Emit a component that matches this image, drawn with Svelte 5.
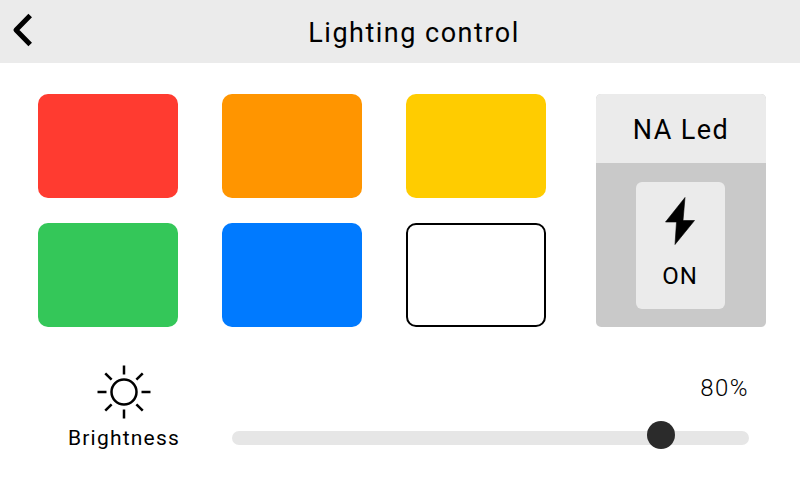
<script>
  const swatches = ['red', 'orange', 'yellow', 'green', 'blue', 'white'];
  const rays = [0, 45, 90, 135, 180, 225, 270, 315];
</script>

<div class="screen">
  <header class="top">
    <button class="back" aria-label="Back">
      <svg width="22" height="38" viewBox="0 0 22 38"><path d="M19.2 4.5 L5 19 L19.2 33.5" fill="none" stroke="#000" stroke-width="5" stroke-linejoin="round" /></svg>
    </button>
    <h1>Lighting control</h1>
  </header>
  <main class="body">
    <div class="upper">
      <div class="grid">
        {#each swatches as s}
          <div class="swatch {s}"></div>
        {/each}
      </div>
      <section class="device">
        <div class="name">NA Led</div>
        <div class="well">
          <div class="toggle">
            <svg width="30" height="48" viewBox="0 0 30 48"><path d="M20 0.5 L0.5 25 H11.5 L10 47.5 L29.5 23.5 H18 Z" fill="#000" stroke="#000" stroke-width="0.6" stroke-linejoin="round" /></svg>
            <span>ON</span>
          </div>
        </div>
      </section>
    </div>
    <div class="lower">
      <div class="label">
        <svg width="54" height="54" viewBox="0 0 54 54">
          <circle cx="27" cy="27" r="12.5" fill="none" stroke="#000" stroke-width="2.5" />
          {#each rays as r}
            <line x1="27" y1="0.5" x2="27" y2="9.5" stroke="#000" stroke-width="2.5" transform="rotate({r} 27 27)" />
          {/each}
        </svg>
        <span>Brightness</span>
      </div>
      <div class="slider">
        <div class="value">80%</div>
        <div class="track"><div class="thumb"></div></div>
      </div>
    </div>
  </main>
</div>

<style>
  :global(body) { margin: 0; background: #fff; }
  .screen { width: 800px; height: 480px; display: flex; flex-direction: column; font-family: Roboto, "Noto Sans", sans-serif; color: #000; overflow: hidden; background: #fff; }
  .top { height: 63px; background: #ebebeb; display: flex; align-items: center; justify-content: center; position: relative; padding-left: 28px; }
  .top h1 { margin: 0; font-size: 27px; font-weight: 400; letter-spacing: 1.5px; line-height: 32px; padding-top: 2px; }
  .back { position: absolute; left: 11px; top: 11px; padding: 0; border: 0; background: none; display: flex; }
  .body { padding: 31px 34px 0 38px; display: flex; flex-direction: column; }
  .upper { display: flex; justify-content: space-between; }
  .grid { display: grid; grid-template-columns: repeat(3, 140px); grid-auto-rows: 104px; column-gap: 44px; row-gap: 25px; }
  .swatch { border-radius: 10px; box-sizing: border-box; }
  .red { background: #ff3b30; }
  .orange { background: #ff9500; }
  .yellow { background: #ffcc00; }
  .green { background: #34c759; }
  .blue { background: #007aff; }
  .white { background: #fff; border: 2px solid #000; }
  .device { width: 170px; height: 233px; border-radius: 5px; overflow: hidden; display: flex; flex-direction: column; background: #c9c9c9; }
  .name { height: 69px; background: #ebebeb; display: flex; align-items: center; justify-content: center; font-size: 27px; letter-spacing: 1.4px; padding-top: 3px; box-sizing: border-box; }
  .well { flex: 1; display: flex; align-items: center; justify-content: center; padding-right: 2px; }
  .toggle { width: 89px; height: 127px; background: #ebebeb; border-radius: 6px; display: flex; flex-direction: column; align-items: center; padding-top: 15px; box-sizing: border-box; gap: 19px; font-size: 24px; line-height: 24px; letter-spacing: 1px; }
  .toggle svg { display: block; }
  .lower { display: flex; margin-top: 38px; }
  .label { width: 173px; display: flex; flex-direction: column; align-items: center; margin-left: -1px; gap: 6px; font-size: 21px; line-height: 26px; letter-spacing: 1.2px; padding-left: 1px; box-sizing: border-box; }
  .slider { width: 517px; margin-left: 22px; display: flex; flex-direction: column; align-items: flex-end; }
  .value { font-size: 24px; line-height: 26px; margin-top: 10px; letter-spacing: 1.5px; font-weight: 300; }
  .track { width: 100%; height: 14px; border-radius: 7px; background: #e6e6e6; margin-top: 30px; position: relative; }
  .thumb { position: absolute; left: 415px; top: -10px; width: 28px; height: 28px; border-radius: 50%; background: #2b2b2b; }
</style>
